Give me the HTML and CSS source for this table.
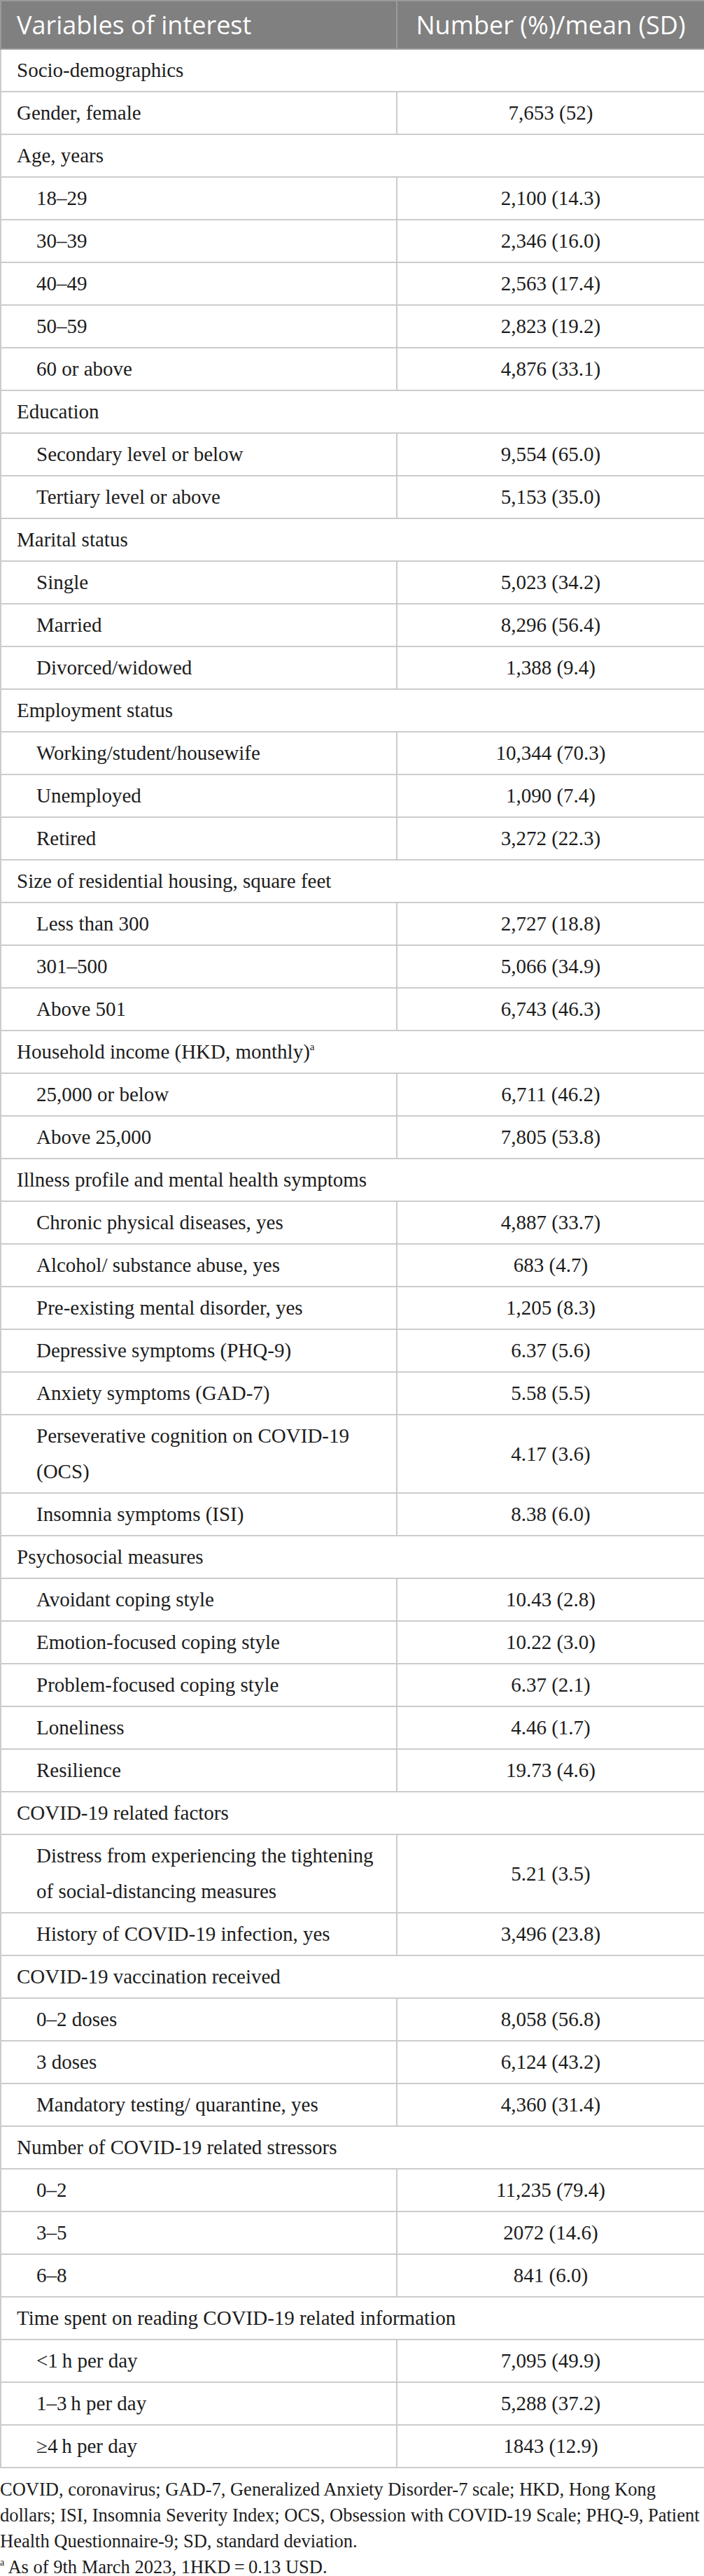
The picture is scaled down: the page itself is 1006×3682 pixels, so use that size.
FILE: index.html
```html
<!DOCTYPE html>
<html lang="en">
<head>
<meta charset="utf-8">
<title>Table</title>
<link rel="stylesheet" href="styles.css">
</head>
<body>
<table class="data">
  <colgroup><col class="c1"><col class="c2"></colgroup>
  <thead>
    <tr><th class="h">Variables of interest</th><th class="h hv">Number (%)/mean (SD)</th></tr>
  </thead>
  <tbody>
    <tr><td class="sec" colspan="2">Socio-demographics</td></tr>
    <tr><td class="lab">Gender, female</td><td class="val">7,653 (52)</td></tr>
    <tr><td class="sec" colspan="2">Age, years</td></tr>
    <tr><td class="lab ind">18–29</td><td class="val">2,100 (14.3)</td></tr>
    <tr><td class="lab ind">30–39</td><td class="val">2,346 (16.0)</td></tr>
    <tr><td class="lab ind">40–49</td><td class="val">2,563 (17.4)</td></tr>
    <tr><td class="lab ind">50–59</td><td class="val">2,823 (19.2)</td></tr>
    <tr><td class="lab ind">60 or above</td><td class="val">4,876 (33.1)</td></tr>
    <tr><td class="sec" colspan="2">Education</td></tr>
    <tr><td class="lab ind">Secondary level or below</td><td class="val">9,554 (65.0)</td></tr>
    <tr><td class="lab ind">Tertiary level or above</td><td class="val">5,153 (35.0)</td></tr>
    <tr><td class="sec" colspan="2">Marital status</td></tr>
    <tr><td class="lab ind">Single</td><td class="val">5,023 (34.2)</td></tr>
    <tr><td class="lab ind">Married</td><td class="val">8,296 (56.4)</td></tr>
    <tr><td class="lab ind">Divorced/widowed</td><td class="val">1,388 (9.4)</td></tr>
    <tr><td class="sec" colspan="2">Employment status</td></tr>
    <tr><td class="lab ind">Working/student/housewife</td><td class="val">10,344 (70.3)</td></tr>
    <tr><td class="lab ind">Unemployed</td><td class="val">1,090 (7.4)</td></tr>
    <tr><td class="lab ind">Retired</td><td class="val">3,272 (22.3)</td></tr>
    <tr><td class="sec" colspan="2">Size of residential housing, square feet</td></tr>
    <tr><td class="lab ind">Less than 300</td><td class="val">2,727 (18.8)</td></tr>
    <tr><td class="lab ind">301–500</td><td class="val">5,066 (34.9)</td></tr>
    <tr><td class="lab ind">Above 501</td><td class="val">6,743 (46.3)</td></tr>
    <tr><td class="sec" colspan="2">Household income (HKD, monthly)<sup class="sup">a</sup></td></tr>
    <tr><td class="lab ind">25,000 or below</td><td class="val">6,711 (46.2)</td></tr>
    <tr><td class="lab ind">Above 25,000</td><td class="val">7,805 (53.8)</td></tr>
    <tr><td class="sec" colspan="2">Illness profile and mental health symptoms</td></tr>
    <tr><td class="lab ind">Chronic physical diseases, yes</td><td class="val">4,887 (33.7)</td></tr>
    <tr><td class="lab ind">Alcohol/ substance abuse, yes</td><td class="val">683 (4.7)</td></tr>
    <tr><td class="lab ind">Pre-existing mental disorder, yes</td><td class="val">1,205 (8.3)</td></tr>
    <tr><td class="lab ind">Depressive symptoms (PHQ-9)</td><td class="val">6.37 (5.6)</td></tr>
    <tr><td class="lab ind">Anxiety symptoms (GAD-7)</td><td class="val">5.58 (5.5)</td></tr>
    <tr><td class="lab ind">Perseverative cognition on COVID-19 (OCS)</td><td class="val">4.17 (3.6)</td></tr>
    <tr><td class="lab ind">Insomnia symptoms (ISI)</td><td class="val">8.38 (6.0)</td></tr>
    <tr><td class="sec" colspan="2">Psychosocial measures</td></tr>
    <tr><td class="lab ind">Avoidant coping style</td><td class="val">10.43 (2.8)</td></tr>
    <tr><td class="lab ind">Emotion-focused coping style</td><td class="val">10.22 (3.0)</td></tr>
    <tr><td class="lab ind">Problem-focused coping style</td><td class="val">6.37 (2.1)</td></tr>
    <tr><td class="lab ind">Loneliness</td><td class="val">4.46 (1.7)</td></tr>
    <tr><td class="lab ind">Resilience</td><td class="val">19.73 (4.6)</td></tr>
    <tr><td class="sec" colspan="2">COVID-19 related factors</td></tr>
    <tr><td class="lab ind">Distress from experiencing the tightening of social-distancing measures</td><td class="val">5.21 (3.5)</td></tr>
    <tr><td class="lab ind">History of COVID-19 infection, yes</td><td class="val">3,496 (23.8)</td></tr>
    <tr><td class="sec" colspan="2">COVID-19 vaccination received</td></tr>
    <tr><td class="lab ind">0–2 doses</td><td class="val">8,058 (56.8)</td></tr>
    <tr><td class="lab ind">3 doses</td><td class="val">6,124 (43.2)</td></tr>
    <tr><td class="lab ind">Mandatory testing/ quarantine, yes</td><td class="val">4,360 (31.4)</td></tr>
    <tr><td class="sec" colspan="2">Number of COVID-19 related stressors</td></tr>
    <tr><td class="lab ind">0–2</td><td class="val">11,235 (79.4)</td></tr>
    <tr><td class="lab ind">3–5</td><td class="val">2072 (14.6)</td></tr>
    <tr><td class="lab ind">6–8</td><td class="val">841 (6.0)</td></tr>
    <tr><td class="sec" colspan="2">Time spent on reading COVID-19 related information</td></tr>
    <tr><td class="lab ind">&lt;1&#8201;h per day</td><td class="val">7,095 (49.9)</td></tr>
    <tr><td class="lab ind">1–3&#8201;h per day</td><td class="val">5,288 (37.2)</td></tr>
    <tr><td class="lab ind">≥4&#8201;h per day</td><td class="val">1843 (12.9)</td></tr>
  </tbody>
</table>
<div class="notes">
  <p class="note">COVID, coronavirus; GAD-7, Generalized Anxiety Disorder-7 scale; HKD, Hong Kong dollars; ISI, Insomnia Severity Index; OCS, Obsession with COVID-19 Scale; PHQ-9, Patient Health Questionnaire-9; SD, standard deviation.</p>
  <p class="note"><sup class="fsup">a</sup> As of 9th March 2023, 1HKD&#8201;=&#8201;0.13 USD.</p>
</div>
</body>
</html>
```
FILE: styles.css
```css
html, body {
  margin: 0;
  padding: 0;
  background: #ffffff;
}

body {
  font-family: "Liberation Serif", "Times New Roman", serif;
  color: #1c1c1c;
  width: 1006px;
}

.data {
  width: 1006px;
  border-collapse: collapse;
  table-layout: fixed;
}

.c1 { width: 566px; }
.c2 { width: 440px; }

.h {
  background: #808080;
  color: #ffffff;
  font-family: "Open Sans", "Noto Sans", sans-serif;
  font-weight: 400;
  font-size: 36px;
  line-height: 57px;
  padding: 5px 22px 5px 22px;
  text-align: left;
  border: 2px solid #9a9a9a;
}

.hv {
  text-align: center;
  padding: 5px 6px;
}

td {
  font-size: 29px;
  line-height: 51px;
  padding: 4px 22px;
  border: 2px solid #cccccc;
  vertical-align: middle;
}

.ind {
  padding-left: 50px;
}

.val {
  text-align: center;
}

.sup {
  font-size: 15px;
  line-height: 0;
  vertical-align: 12px;
}

.notes {
  margin-top: 12px;
}

.note {
  margin: 0;
  font-size: 26.5px;
  line-height: 37px;
}

.fsup {
  font-size: 14px;
  line-height: 0;
  vertical-align: 11px;
}
```
